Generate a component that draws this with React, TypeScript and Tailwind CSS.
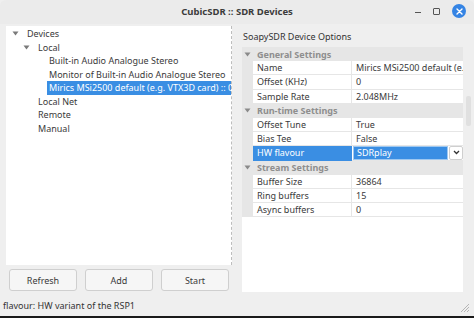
import React from "react";

const treeRows: { label: string; indent: number; arrow?: boolean; selected?: boolean }[] = [
  { label: "Devices", indent: 0, arrow: true },
  { label: "Local", indent: 1, arrow: true },
  { label: "Built-in Audio Analogue Stereo", indent: 2 },
  { label: "Monitor of Built-in Audio Analogue Stereo", indent: 2 },
  { label: "Mirics MSi2500 default (e.g. VTX3D card) :: 00000001", indent: 2, selected: true },
  { label: "Local Net", indent: 1 },
  { label: "Remote", indent: 1 },
  { label: "Manual", indent: 1 },
];

type Row = { cat: string } | { name: string; value: string; selected?: boolean };

const props: Row[] = [
  { cat: "General Settings" },
  { name: "Name", value: "Mirics MSi2500 default (e.g. VTX3D card)" },
  { name: "Offset (KHz)", value: "0" },
  { name: "Sample Rate", value: "2.048MHz" },
  { cat: "Run-time Settings" },
  { name: "Offset Tune", value: "True" },
  { name: "Bias Tee", value: "False" },
  { name: "HW flavour", value: "SDRplay", selected: true },
  { cat: "Stream Settings" },
  { name: "Buffer Size", value: "36864" },
  { name: "Ring buffers", value: "15" },
  { name: "Async buffers", value: "0" },
];

function Arrow({ color = "#7a7a7a" }: { color?: string }) {
  return (
    <svg width="7" height="5" viewBox="0 0 7 5">
      <path d="M0.5 0.5 L6.5 0.5 L3.5 4.5 Z" fill={color} />
    </svg>
  );
}

export default function App() {
  return (
    <div
      className="w-[474px] h-[318px] bg-[#efefef] flex flex-col overflow-hidden text-[#3a3a3a] leading-none"
      style={{ fontFamily: '"Noto Sans", "DejaVu Sans", sans-serif' }}
    >
      {/* title bar */}
      <div className="h-[24px] shrink-0 relative flex items-center justify-center bg-[#ebebeb] rounded-t-[6px]">
        <span className="text-[9.5px] font-bold text-[#3c3c3c]">CubicSDR :: SDR Devices</span>
        <div className="absolute right-[8px] top-[4px] flex items-center gap-[12px]">
          <div className="w-[6px] h-[1.5px] bg-[#555] mt-[3px]" />
          <div className="w-[7px] h-[7px] border-[1.2px] border-[#555] rounded-[1px]" />
          <div className="w-[14px] h-[14px] rounded-full bg-[#3584e4] flex items-center justify-center">
            <svg width="7" height="7" viewBox="0 0 7 7">
              <path d="M1 1 L6 6 M6 1 L1 6" stroke="white" strokeWidth="1.4" strokeLinecap="round" />
            </svg>
          </div>
        </div>
      </div>

      <div className="flex flex-1 pt-[2px]">
        {/* left column */}
        <div className="ml-[6px] w-[226px] flex flex-col">
          <div className="h-[239px] bg-white border-r border-dashed border-[#bdbdbd] pt-[1px] overflow-hidden">
            {treeRows.map((r, i) => (
              <div key={i} className="h-[13.5px] flex items-center whitespace-nowrap text-[9px]">
                <div
                  className="flex items-center h-full shrink-0"
                  style={{ paddingLeft: 6 + r.indent * 11 }}
                >
                  <div className="w-[13px] flex items-center">{r.arrow && <Arrow />}</div>
                </div>
                <div
                  className={`h-full flex items-center pl-[2px] flex-1 ${r.selected ? "bg-[#3a8ee3] text-white" : ""}`}
                >
                  {r.label}
                </div>
              </div>
            ))}
          </div>
          <div className="flex gap-[8px] px-[3px] mt-[4px]">
            {["Refresh", "Add", "Start"].map((b) => (
              <button
                key={b}
                className="w-[68px] h-[22px] bg-[#f6f6f6] border border-[#cfcfcf] rounded-[3px] text-[9px] text-[#3a3a3a]"
              >
                {b}
              </button>
            ))}
          </div>
        </div>

        {/* right column */}
        <div className="ml-[10px] w-[221px] flex flex-col">
          <div className="h-[21px] flex items-center pl-[1px] text-[9px] text-[#333]">SoapySDR Device Options</div>
          <div className="h-[245px] bg-white relative">
            {props.map((r, i) =>
              "cat" in r ? (
                <div key={i} className="h-[14.2px] bg-[#e6e6e6] flex items-center text-[9px] font-bold text-[#8e8e8e]">
                  <div className="w-[15px] pl-[2px] flex items-center">
                    <Arrow color="#8a8a8a" />
                  </div>
                  {r.cat}
                </div>
              ) : (
                <div key={i} className="h-[14.2px] flex text-[9px] whitespace-nowrap">
                  <div className="w-[11px] bg-[#e6e6e6] shrink-0" />
                  <div
                    className={`w-[99px] shrink-0 flex items-center pl-[4px] border-r border-b ${
                      r.selected ? "bg-[#3a8ee3] text-white border-[#3a8ee3]" : "border-[#e6e6e6]"
                    }`}
                  >
                    {r.name}
                  </div>
                  {r.selected ? (
                    <div className="flex-1 flex items-stretch border-b border-[#e6e6e6] pl-[1px]">
                      <div className="flex-1 bg-[#3a8ee3] text-white border border-[#9fc8f0] flex items-center pl-[3px]">
                        {r.value}
                      </div>
                      <div className="w-[14px] ml-[1px] bg-white border border-[#cfcfcf] rounded-[2px] flex items-center justify-center">
                        <svg width="7" height="5" viewBox="0 0 7 5">
                          <path d="M1 1 L3.5 3.5 L6 1" stroke="#333" strokeWidth="1.3" fill="none" />
                        </svg>
                      </div>
                    </div>
                  ) : (
                    <div className="flex-1 min-w-0 flex items-center pl-[4px] border-b border-[#e6e6e6] overflow-hidden">
                      {r.value}
                    </div>
                  )}
                </div>
              )
            )}
          </div>
        </div>
        <div className="ml-[3px] w-[5px] mt-[70px] h-[30px] bg-[#e0e0e0] rounded-[2px]" />
      </div>

      {/* status bar */}
      <div className="h-[22px] shrink-0 relative flex items-center pl-[3px] text-[9px] text-[#333]">
        flavour: HW variant of the RSP1
        <svg className="absolute right-[4px] bottom-[3px]" width="11" height="11" viewBox="0 0 11 11">
          <path d="M10 2 L2 10 M10 5 L5 10 M10 8 L8 10" stroke="#b5b5b5" strokeWidth="1" />
        </svg>
      </div>
      <div className="h-[2px] bg-[#1a1a1a] shrink-0" />
    </div>
  );
}
